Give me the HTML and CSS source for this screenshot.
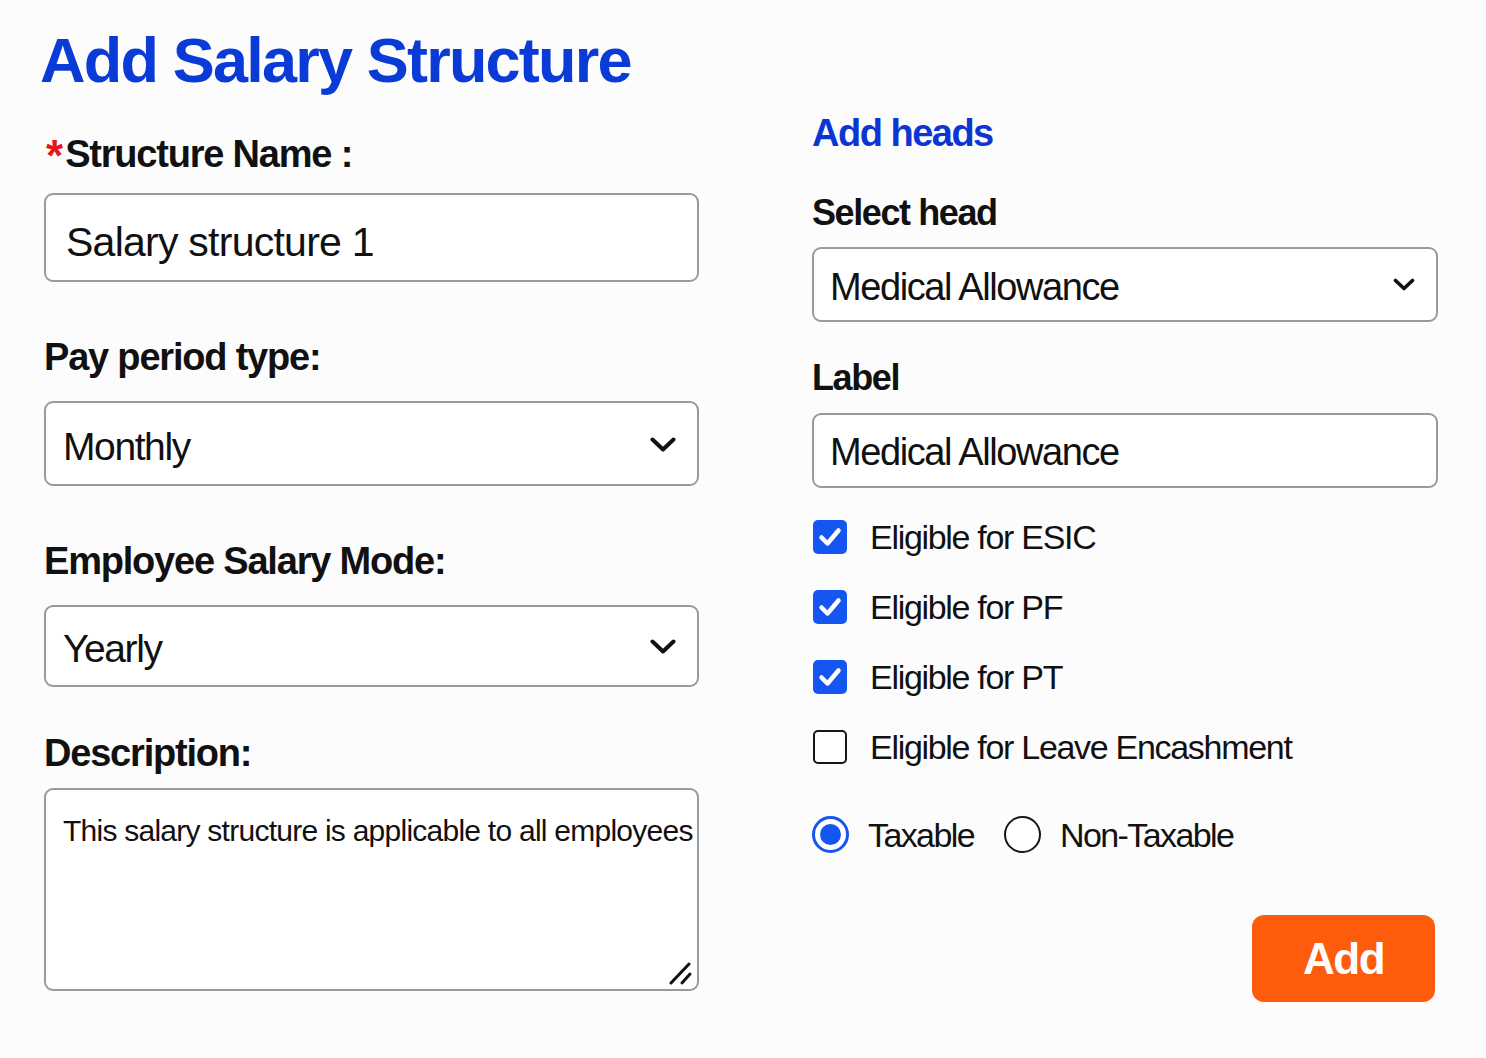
FILE: index.html
```html
<!DOCTYPE html>
<html lang="en">
<head>
<meta charset="utf-8">
<title>Add Salary Structure</title>
<link rel="stylesheet" href="styles.css">
</head>
<body>
<main class="page">
  <section class="col col-left">
    <h1 class="title">Add Salary Structure</h1>

    <div class="field field-name">
      <div class="label label-lg"><span class="req">*</span>Structure Name :</div>
      <div class="control control-name">Salary structure 1</div>
    </div>

    <div class="field field-period">
      <div class="label label-lg">Pay period type:</div>
      <div class="control select select-lg select-period">
        <span>Monthly</span>
        <svg class="chevron chevron-lg" viewBox="0 0 26 15" aria-hidden="true"><polyline points="2.5,2.5 13,12.5 23.5,2.5"/></svg>
      </div>
    </div>

    <div class="field field-mode">
      <div class="label label-lg">Employee Salary Mode:</div>
      <div class="control select select-lg select-mode">
        <span>Yearly</span>
        <svg class="chevron chevron-lg" viewBox="0 0 26 15" aria-hidden="true"><polyline points="2.5,2.5 13,12.5 23.5,2.5"/></svg>
      </div>
    </div>

    <div class="field field-desc">
      <div class="label label-lg">Description:</div>
      <div class="textarea">This salary structure is applicable to all employees
        <svg class="grip" viewBox="0 0 24 24" aria-hidden="true"><line x1="3" y1="22" x2="21" y2="3"/><line x1="14" y1="22" x2="22" y2="13"/></svg>
      </div>
    </div>
  </section>

  <section class="col col-right">
    <h2 class="heading">Add heads</h2>

    <div class="label label-sm label-head">Select head</div>
    <div class="control select select-sm control-head">
      <span>Medical Allowance</span>
      <svg class="chevron chevron-sm" viewBox="0 0 22 13" aria-hidden="true"><polyline points="2.5,2.5 11,10.5 19.5,2.5"/></svg>
    </div>

    <div class="label label-sm label-label">Label</div>
    <div class="control select-sm control-label">Medical Allowance</div>

    <div class="checks">
      <div class="check-row">
        <span class="box box-on"><svg viewBox="0 0 34 34" aria-hidden="true"><polyline points="8.5,17.5 14.5,23.5 25.5,10.5"/></svg></span>
        <span>Eligible for ESIC</span>
      </div>
      <div class="check-row">
        <span class="box box-on"><svg viewBox="0 0 34 34" aria-hidden="true"><polyline points="8.5,17.5 14.5,23.5 25.5,10.5"/></svg></span>
        <span>Eligible for PF</span>
      </div>
      <div class="check-row">
        <span class="box box-on"><svg viewBox="0 0 34 34" aria-hidden="true"><polyline points="8.5,17.5 14.5,23.5 25.5,10.5"/></svg></span>
        <span>Eligible for PT</span>
      </div>
      <div class="check-row">
        <span class="box box-off"></span>
        <span>Eligible for Leave Encashment</span>
      </div>
    </div>

    <div class="radios">
      <div class="radio-item">
        <span class="radio radio-on"><span class="dot"></span></span>
        <span>Taxable</span>
      </div>
      <div class="radio-item">
        <span class="radio radio-off"></span>
        <span>Non-Taxable</span>
      </div>
    </div>

    <button class="add-btn" type="button">Add</button>
  </section>
</main>
</body>
</html>
```

FILE: styles.css
```css
* { box-sizing: border-box; }

html, body {
  margin: 0;
  background: #fcfcfc;
}

body {
  font-family: "Liberation Sans", Arial, sans-serif;
  color: #111;
}

.page {
  display: flex;
  gap: 113px;
  padding: 24px 0 0 44px;
}

.col {
  display: flex;
  flex-direction: column;
}

.col-left { width: 655px; }
.col-right { width: 626px; padding-top: 88px; }

.title {
  margin: 0 0 0 -4px;
  font-size: 63px;
  line-height: 72px;
  letter-spacing: -1.8px;
  font-weight: 700;
  color: #0b3bd6;
  white-space: nowrap;
}

.heading {
  margin: 0;
  font-size: 38px;
  line-height: 43px;
  letter-spacing: -1.5px;
  font-weight: 700;
  color: #0b36d3;
}

.label {
  font-weight: 700;
  white-space: nowrap;
}
.label-lg { font-size: 38px; line-height: 44px; letter-spacing: -1.2px; }
.label-sm { font-size: 36px; line-height: 41px; letter-spacing: -1.4px; }

.req {
  color: #e5161e;
  font-size: 44px;
  line-height: 0;
  font-weight: 700;
  vertical-align: -4px;
  margin-left: 2px;
  margin-right: 2px;
  letter-spacing: 0;
}

.field { display: flex; flex-direction: column; }
.field-name { margin-top: 36px; }
.field-period, .field-mode { margin-top: 53px; }
.field-desc { margin-top: 44px; }

.control {
  display: flex;
  align-items: center;
  border: 2px solid #9a9a9a;
  border-radius: 9px;
  background: #fff;
  line-height: 1;
  white-space: nowrap;
}

.control-name {
  margin-top: 17px;
  height: 89px;
  padding: 9px 0 0 20px;
  font-size: 41px;
  letter-spacing: -0.75px;
}

.select {
  justify-content: space-between;
}

.select-lg {
  margin-top: 22px;
  padding: 0 21px 0 17px;
  font-size: 39px;
  letter-spacing: -1.4px;
}
.select-period { height: 85px; padding-top: 6px; }
.select-mode { height: 82px; padding-top: 5px; }

.chevron {
  flex: none;
  fill: none;
  stroke: #111;
  stroke-linecap: round;
  stroke-linejoin: round;
}
.chevron-lg { width: 26px; height: 15px; stroke-width: 4; }
.chevron-sm { width: 22px; height: 13px; stroke-width: 3.6; }

.select-period .chevron { margin-top: -5px; }
.select-mode .chevron { margin-top: -5px; }

.textarea {
  position: relative;
  margin-top: 13px;
  height: 203px;
  padding: 26px 0 0 17px;
  border: 2px solid #9a9a9a;
  border-radius: 9px;
  background: #fff;
  font-size: 30px;
  line-height: 1;
  letter-spacing: -0.75px;
  white-space: nowrap;
}

.grip {
  position: absolute;
  right: 5px;
  bottom: 4px;
  width: 24px;
  height: 24px;
  stroke: #111;
  stroke-width: 3;
  stroke-linecap: round;
}

.select-sm {
  font-size: 38px;
  letter-spacing: -1.4px;
  height: 75px;
  padding: 0 21px 0 16px;
}

.label-head { margin-top: 37px; }
.control-head { margin-top: 14px; padding-top: 5px; }
.control-head .chevron { margin-top: -5px; }
.label-label { margin-top: 35px; }
.control-label { margin-top: 15px; padding-top: 3px; }

.checks {
  margin-top: 32px;
  display: flex;
  flex-direction: column;
  gap: 36px;
}

.check-row {
  display: flex;
  align-items: center;
  gap: 23px;
  height: 34px;
  font-size: 34px;
  letter-spacing: -1.3px;
  line-height: 1;
  white-space: nowrap;
}

.box {
  flex: none;
  width: 34px;
  height: 34px;
  margin-left: 1px;
  border-radius: 5px;
  display: flex;
}
.box-on { background: #1556f0; }
.box-on svg {
  width: 34px;
  height: 34px;
  fill: none;
  stroke: #fff;
  stroke-width: 4.5;
  stroke-linecap: round;
  stroke-linejoin: round;
}
.box-off {
  background: #fff;
  border: 2.5px solid #161616;
}

.radios {
  margin-top: 52px;
  display: flex;
  align-items: center;
  gap: 30px;
}

.radio-item {
  display: flex;
  align-items: center;
  gap: 19px;
  font-size: 34px;
  letter-spacing: -1.6px;
  line-height: 1;
  white-space: nowrap;
}

.radio {
  flex: none;
  width: 37px;
  height: 37px;
  border-radius: 50%;
  display: flex;
  align-items: center;
  justify-content: center;
  background: #fff;
}
.radio-on { border: 3px solid #1556f0; }
.radio-on .dot {
  width: 21px;
  height: 21px;
  border-radius: 50%;
  background: #1556f0;
}
.radio-off { border: 2.5px solid #161616; }

.add-btn {
  align-self: flex-end;
  margin: 62px 3px 0 0;
  width: 183px;
  height: 87px;
  border: none;
  border-radius: 12px;
  background: #ff5b0c;
  color: #fff;
  font-family: inherit;
  font-size: 44px;
  font-weight: 700;
  letter-spacing: -1.5px;
  line-height: 1;
  padding: 0;
}
```
